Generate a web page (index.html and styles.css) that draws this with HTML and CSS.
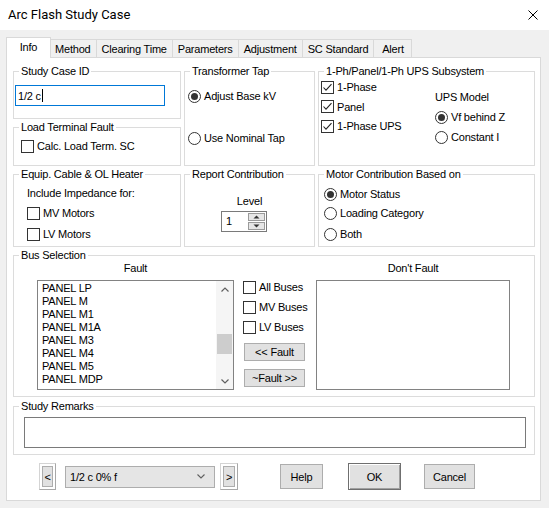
FILE: index.html
```html
<!DOCTYPE html>
<html>
<head>
<meta charset="utf-8">
<title>Arc Flash Study Case</title>
<link rel="stylesheet" href="styles.css">
</head>
<body>
<div class="window">
  <div class="titlebar">
    <span class="title">Arc Flash Study Case</span>
    <svg class="close" viewBox="0 0 10 10"><path d="M0.5 0.5L9.5 9.5M9.5 0.5L0.5 9.5" stroke="#000" stroke-width="1" fill="none"/></svg>
  </div>
  <div class="client">
    <div class="tabs">
      <div class="tab selected">Info</div>
      <div class="tab">Method</div>
      <div class="tab">Clearing Time</div>
      <div class="tab">Parameters</div>
      <div class="tab">Adjustment</div>
      <div class="tab">SC Standard</div>
      <div class="tab last">Alert</div>
    </div>
    <div class="panel">
      <div class="top-grid">
        <fieldset class="group g-id">
          <legend>Study Case ID</legend>
          <div class="textbox focus">1/2 c<span class="caret"></span></div>
        </fieldset>
        <fieldset class="group g-load">
          <legend>Load Terminal Fault</legend>
          <div class="opt load-opt"><span class="cb"></span>Calc. Load Term. SC</div>
        </fieldset>
        <fieldset class="group g-tap">
          <legend>Transformer Tap</legend>
          <div class="opt tap-1"><span class="rb on"></span>Adjust Base kV</div>
          <div class="opt tap-2"><span class="rb"></span>Use Nominal Tap</div>
        </fieldset>
        <fieldset class="group g-ups">
          <legend>1-Ph/Panel/1-Ph UPS Subsystem</legend>
          <div class="ups-body">
            <div class="ups-left">
              <div class="opt"><span class="cb"><svg viewBox="0 0 11 11"><path d="M1.5 5.5L4 8.2L9.5 2.2" stroke="#222" stroke-width="1.1" fill="none"/></svg></span>1-Phase</div>
              <div class="opt"><span class="cb"><svg viewBox="0 0 11 11"><path d="M1.5 5.5L4 8.2L9.5 2.2" stroke="#222" stroke-width="1.1" fill="none"/></svg></span>Panel</div>
              <div class="opt"><span class="cb"><svg viewBox="0 0 11 11"><path d="M1.5 5.5L4 8.2L9.5 2.2" stroke="#222" stroke-width="1.1" fill="none"/></svg></span>1-Phase UPS</div>
            </div>
            <div class="ups-right">
              <div class="line">UPS Model</div>
              <div class="opt"><span class="rb on"></span>Vf behind Z</div>
              <div class="opt"><span class="rb"></span>Constant I</div>
            </div>
          </div>
        </fieldset>
        <fieldset class="group g-equip">
          <legend>Equip. Cable &amp; OL Heater</legend>
          <div class="equip-body">
            <div class="line">Include Impedance for:</div>
            <div class="opt"><span class="cb"></span>MV Motors</div>
            <div class="opt"><span class="cb"></span>LV Motors</div>
          </div>
        </fieldset>
        <fieldset class="group g-report">
          <legend>Report Contribution</legend>
          <div class="report-body">
            <div class="line">Level</div>
            <div class="spin">
              <span class="spin-val">1</span>
              <span class="spin-btns">
                <span class="spin-btn"><svg viewBox="0 0 7 4"><path d="M0.5 3.5L3.5 0.5L6.5 3.5Z" fill="#333"/></svg></span>
                <span class="spin-btn"><svg viewBox="0 0 7 4"><path d="M0.5 0.5L3.5 3.5L6.5 0.5Z" fill="#333"/></svg></span>
              </span>
            </div>
          </div>
        </fieldset>
        <fieldset class="group g-motor">
          <legend>Motor Contribution Based on</legend>
          <div class="motor-body">
            <div class="opt"><span class="rb on"></span>Motor Status</div>
            <div class="opt"><span class="rb"></span>Loading Category</div>
            <div class="opt"><span class="rb"></span>Both</div>
          </div>
        </fieldset>
      </div>

      <fieldset class="group g-bus">
        <legend>Bus Selection</legend>
        <div class="bus-body">
          <div class="bus-col fault-col">
            <div class="col-label">Fault</div>
            <div class="list">
              <div class="list-items">
                <div>PANEL LP</div>
                <div>PANEL M</div>
                <div>PANEL M1</div>
                <div>PANEL M1A</div>
                <div>PANEL M3</div>
                <div>PANEL M4</div>
                <div>PANEL M5</div>
                <div>PANEL MDP</div>
              </div>
              <div class="scrollbar">
                <span class="sb-arrow"><svg viewBox="0 0 8 5"><path d="M0.5 4.5L4 1L7.5 4.5" stroke="#606060" stroke-width="1.2" fill="none"/></svg></span>
                <span class="sb-track"><span class="sb-thumb"></span></span>
                <span class="sb-arrow"><svg viewBox="0 0 8 5"><path d="M0.5 0.5L4 4L7.5 0.5" stroke="#606060" stroke-width="1.2" fill="none"/></svg></span>
              </div>
            </div>
          </div>
          <div class="bus-mid">
            <div class="opt"><span class="cb"></span>All Buses</div>
            <div class="opt"><span class="cb"></span>MV Buses</div>
            <div class="opt"><span class="cb"></span>LV Buses</div>
            <div class="btn small">&lt;&lt; Fault</div>
            <div class="btn small">~Fault &gt;&gt;</div>
          </div>
          <div class="bus-col dont-col">
            <div class="col-label">Don't Fault</div>
            <div class="list"></div>
          </div>
        </div>
      </fieldset>

      <fieldset class="group g-remarks">
        <legend>Study Remarks</legend>
        <div class="remarks-box"></div>
      </fieldset>

      <div class="nav-row">
        <div class="step-btn"><span>&lt;</span></div>
        <div class="combo"><span>1/2 c 0% f</span><svg viewBox="0 0 8 5"><path d="M0.5 0.5L4 4L7.5 0.5" stroke="#606060" stroke-width="1.1" fill="none"/></svg></div>
        <div class="step-btn next"><span>&gt;</span></div>
        <div class="btn dlg help">Help</div>
        <div class="btn dlg ok">OK</div>
        <div class="btn dlg cancel">Cancel</div>
      </div>
    </div>
  </div>
</div>
</body>
</html>
```

FILE: styles.css
```css
* { box-sizing: border-box; }

html, body {
  margin: 0;
  padding: 0;
}

body {
  width: 549px;
  height: 508px;
  overflow: hidden;
  font-family: "Liberation Sans", Arial, sans-serif;
  font-size: 11px;
  letter-spacing: -0.2px;
  color: #000;
  background: #f0f0f0;
}

.window {
  width: 549px;
  height: 508px;
  display: flex;
  flex-direction: column;
  background: #f0f0f0;
}

.titlebar {
  height: 30px;
  flex: none;
  background: #fff;
  display: flex;
  align-items: center;
  justify-content: space-between;
  padding: 0 11px 2px 8px;
}

.title {
  font-family: Roboto, "Liberation Sans", sans-serif;
  font-size: 13px;
  letter-spacing: 0;
}

.close {
  width: 10px;
  height: 10px;
  margin-top: 1px;
}

.client {
  padding: 0 8px 0 6px;
}

/* tabs */
.tabs {
  display: flex;
  align-items: flex-end;
  height: 27px;
  padding-left: 2px;
}

.tab {
  height: 18px;
  min-width: 39px;
  padding: 1px 5px 0;
  display: flex;
  align-items: center;
  justify-content: center;
  border-top: 1px solid #d9d9d9;
  border-left: 1px solid #d9d9d9;
  background: #f0f0f0;
  white-space: nowrap;
}

.tab.last {
  border-right: 1px solid #d9d9d9;
}

.tab.selected {
  position: relative;
  z-index: 1;
  height: 21px;
  min-width: 45px;
  margin: 0 -2px -1px;
  padding: 0 7px 2px;
  background: #fff;
  border-right: 1px solid #d9d9d9;
}

.panel {
  height: 444px;
  background: #fff;
  border: 1px solid #d9d9d9;
  padding: 6px 5px 0 6px;
}

/* group boxes */
.group {
  margin: 0;
  padding: 0;
  min-width: 0;
  border: 1px solid #dcdcdc;
}

.group legend {
  margin-left: 5px;
  padding: 0 2px;
  line-height: 14px;
  font-size: 11px;
}

.top-grid {
  display: grid;
  grid-template-columns: 168px 131px 1fr;
  grid-template-rows: 55px 46px 80px;
  column-gap: 3px;
  row-gap: 1px;
}

.g-id { grid-column: 1; grid-row: 1; }
.g-load { grid-column: 1; grid-row: 2; }
.g-tap { grid-column: 2; grid-row: 1 / span 2; }
.g-ups { grid-column: 3; grid-row: 1 / span 2; }
.g-equip { grid-column: 1; grid-row: 3; }
.g-report { grid-column: 2; grid-row: 3; }
.g-motor { grid-column: 3; grid-row: 3; }

/* common controls */
.opt {
  display: flex;
  align-items: center;
  height: 16px;
  white-space: nowrap;
}

.line {
  height: 16px;
  line-height: 16px;
  white-space: nowrap;
}

.cb {
  flex: none;
  width: 13px;
  height: 13px;
  margin-right: 3px;
  border: 1px solid #333;
  background: #fff;
  display: flex;
}

.cb svg {
  width: 11px;
  height: 11px;
}

.rb {
  flex: none;
  width: 13px;
  height: 13px;
  margin-right: 3px;
  border: 1px solid #333;
  border-radius: 50%;
  background: #fff;
  display: flex;
  align-items: center;
  justify-content: center;
}

.rb.on::after {
  content: "";
  width: 7px;
  height: 7px;
  border-radius: 50%;
  background: #333;
}

.textbox {
  margin: 7px 0 0 1px;
  width: 150px;
  height: 21px;
  border: 1px solid #7a7a7a;
  background: #fff;
  padding-left: 2px;
  display: flex;
  align-items: center;
}

.textbox.focus {
  border-color: #0078d7;
}

.caret {
  display: inline-block;
  width: 1px;
  height: 13px;
  margin-left: 1px;
  background: #000;
}

.load-opt {
  margin: 4px 0 0 7px;
}

.tap-1 {
  margin: 10px 0 0 3px;
}

.tap-2 {
  margin: 26px 0 0 3px;
}

.ups-body {
  display: grid;
  grid-template-columns: 114px 1fr;
  padding-left: 2px;
}

.ups-left {
  display: flex;
  flex-direction: column;
  gap: 3.5px;
  margin-top: 1px;
}

.ups-right {
  display: flex;
  flex-direction: column;
  gap: 4px;
  margin-top: 11px;
}

.equip-body {
  display: flex;
  flex-direction: column;
  padding: 4px 0 0 13px;
}

.equip-body .opt:nth-child(2) { margin-top: 4px; }
.equip-body .opt:nth-child(3) { margin-top: 5px; }

.report-body {
  display: flex;
  flex-direction: column;
  align-items: center;
  padding-top: 12px;
}

.spin {
  align-self: flex-start;
  margin: 2px 0 0 36px;
  width: 46px;
  height: 21px;
  border: 1px solid #7a7a7a;
  background: #fff;
  display: flex;
}

.spin-val {
  flex: 1;
  padding-left: 4px;
  line-height: 19px;
}

.spin-btns {
  width: 18px;
  display: flex;
  flex-direction: column;
  gap: 1px;
  padding: 1px 1px 1px 0;
}

.spin-btn {
  flex: 1;
  background: #e6e6e6;
  border: 1px solid #9a9a9a;
  display: flex;
  align-items: center;
  justify-content: center;
}

.spin-btn svg {
  width: 7px;
  height: 4px;
}

.motor-body {
  display: flex;
  flex-direction: column;
  padding: 5px 0 0 5px;
}

.motor-body .opt:nth-child(2) { margin-top: 3px; }
.motor-body .opt:nth-child(3) { margin-top: 5px; }

/* bus selection */
.g-bus {
  margin-top: 1px;
  height: 149px;
}

.bus-body {
  display: flex;
  padding-left: 23px;
}

.bus-col {
  display: flex;
  flex-direction: column;
}

.fault-col { width: 197px; }
.dont-col { width: 194px; margin-left: 10px; }

.col-label {
  height: 13px;
  line-height: 13px;
  text-align: center;
}

.list {
  margin-top: 5px;
  height: 110px;
  border: 1px solid #828282;
  background: #fff;
  display: flex;
}

.list-items {
  flex: 1;
  padding: 1px 0 0 4px;
  line-height: 13px;
  white-space: nowrap;
}

.scrollbar {
  width: 17px;
  background: #f5f5f5;
  display: flex;
  flex-direction: column;
}

.sb-arrow {
  height: 16px;
  display: flex;
  align-items: center;
  justify-content: center;
}

.sb-arrow svg {
  width: 8px;
  height: 5px;
}

.sb-track {
  flex: 1;
  display: flex;
  flex-direction: column;
  padding: 0 1px;
}

.sb-thumb {
  margin-top: 37px;
  height: 20px;
  background: #cdcdcd;
}

.bus-mid {
  width: 63px;
  margin-left: 9px;
  padding-top: 17px;
  display: flex;
  flex-direction: column;
  gap: 4px;
}

.btn {
  background: #e1e1e1;
  border: 1px solid #adadad;
  display: flex;
  align-items: center;
  justify-content: center;
  white-space: nowrap;
}

.btn.small {
  width: 61px;
  height: 18px;
  margin-left: 1px;
  margin-top: 4px;
}

/* remarks */
.g-remarks {
  margin-top: 2px;
  height: 56px;
}

.remarks-box {
  margin: 4px 0 0 10px;
  width: 502px;
  height: 31px;
  border: 1px solid #7a7a7a;
  background: #fff;
}

/* bottom row */
.nav-row {
  margin-top: 8px;
  height: 27px;
  display: flex;
  align-items: center;
  padding-left: 26px;
}

.step-btn {
  width: 17px;
  height: 27px;
  background: #fff;
  border: 1px solid;
  border-color: #d4d4d4 #a8a8a8 #a8a8a8 #d4d4d4;
  padding: 2px;
  display: flex;
}

.step-btn span {
  flex: 1;
  background: #e1e1e1;
  border: 1px solid #adadad;
  display: flex;
  align-items: center;
  justify-content: center;
}

.step-btn.next {
  width: 18px;
  margin-left: 5px;
}

.combo {
  margin-left: 9px;
  width: 150px;
  height: 22px;
  background: #e5e5e5;
  border: 1px solid #adadad;
  display: flex;
  align-items: center;
  justify-content: space-between;
  padding: 0 9px 0 4px;
}

.combo svg {
  width: 8px;
  height: 5px;
}

.btn.dlg {
  height: 25px;
}

.help {
  width: 43px;
  margin-left: 42px;
}

.ok {
  width: 53px;
  height: 27px !important;
  margin-left: 25px;
  border: 1px solid #6f6f6f;
  box-shadow: inset 1px 1px 0 #fff, inset -1px -1px 0 #a0a0a0;
}

.cancel {
  width: 51px;
  margin-left: 23px;
}
```
